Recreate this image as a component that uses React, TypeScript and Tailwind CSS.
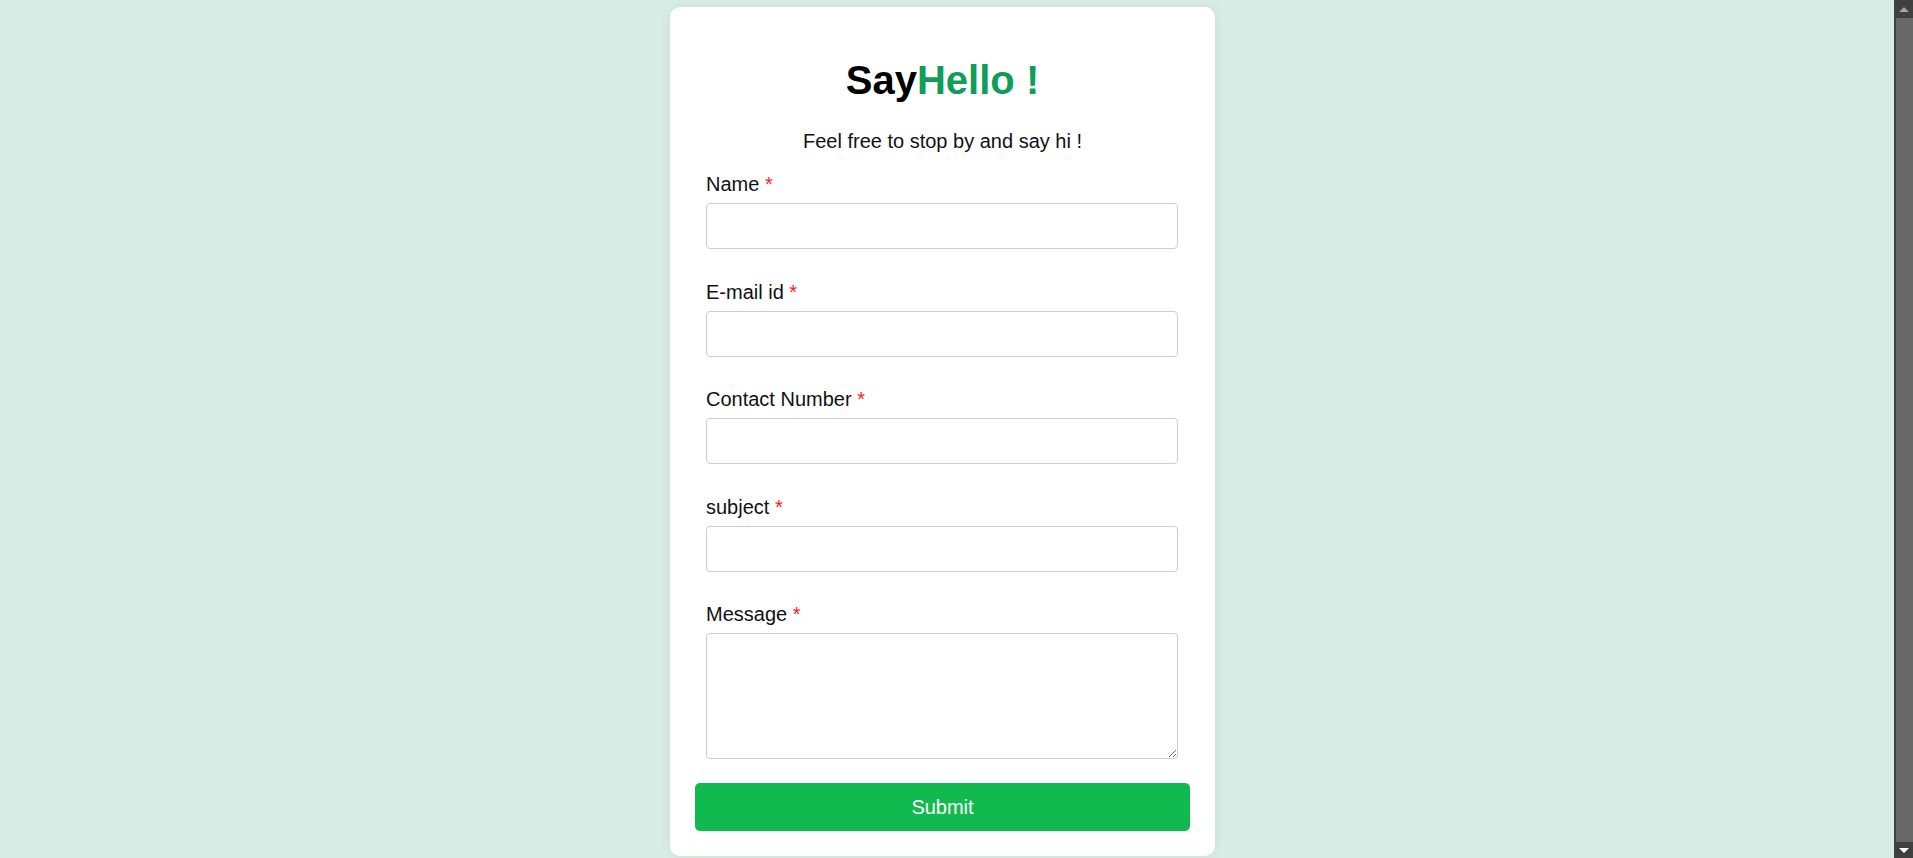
import React from 'react';

const FIELDS = [
  { id: 'name', label: 'Name', type: 'text' },
  { id: 'email', label: 'E-mail id', type: 'email' },
  { id: 'contact', label: 'Contact Number', type: 'tel' },
  { id: 'subject', label: 'subject', type: 'text' },
];

function Label({ htmlFor, text }: { htmlFor: string; text: string }) {
  return (
    <label htmlFor={htmlFor} className="block text-[20px] leading-[23px] text-[#111]">
      {text} <span className="text-[#ff1a1a]">*</span>
    </label>
  );
}

// imitation of the browser's scrollbar strip seen in the screenshot
function ScrollStrip() {
  return (
    <div className="w-[19px] shrink-0 h-full bg-[#404040] flex flex-col items-end">
      <div className="h-[18px] w-full flex items-center justify-center">
        <div className="w-0 h-0 border-l-[5px] border-r-[5px] border-b-[5px] border-l-transparent border-r-transparent border-b-[#a3a3a3]" />
      </div>
      <div className="flex-1 w-[17px] bg-[#686868]" />
      <div className="h-[16px] w-full flex items-center justify-center">
        <div className="w-0 h-0 border-l-[5px] border-r-[5px] border-t-[5px] border-l-transparent border-r-transparent border-t-white" />
      </div>
    </div>
  );
}

export default function App() {
  return (
    <div
      className="h-[858px] overflow-hidden bg-[#d8ede5] flex"
      style={{ fontFamily: "'Liberation Sans', Arial, sans-serif" }}
    >
      <div className="flex-1 flex justify-center pr-[9px] pt-[7px]">
        <form
          onSubmit={(e) => e.preventDefault()}
          className="w-[545px] h-fit bg-white rounded-[10px] shadow-[0_0_12px_rgba(0,60,40,0.08)] px-[25px] pt-[25px] pb-[25px]"
        >
          <h1 className="mt-[25px] text-center text-[40px] leading-[46px] font-bold text-black">
            Say<span className="text-[#0f9d58]">Hello !</span>
          </h1>
          <p className="mt-[27px] text-center text-[20px] leading-[23px] text-[#111]">
            Feel free to stop by and say hi !
          </p>
          <div className="mt-[20px] pl-[11px] pr-[12px]">
            {FIELDS.map((f) => (
              <div key={f.id} className="mb-[31.5px]">
                <Label htmlFor={f.id} text={f.label} />
                <input
                  id={f.id}
                  type={f.type}
                  className="mt-[7px] block w-full h-[46px] rounded-[4px] border border-[#cccccc] bg-white px-3 text-[18px] outline-none"
                />
              </div>
            ))}
            <div>
              <Label htmlFor="message" text="Message" />
              <textarea
                id="message"
                className="mt-[7px] block w-full h-[126px] rounded-[4px] border border-[#cccccc] bg-white px-3 py-2 text-[18px] outline-none"
              />
            </div>
          </div>
          <button
            type="submit"
            className="mt-[24px] block w-full h-[48px] rounded-[5px] bg-[#11ba4f] text-white text-[20px]"
          >
            Submit
          </button>
        </form>
      </div>
      <ScrollStrip />
    </div>
  );
}
